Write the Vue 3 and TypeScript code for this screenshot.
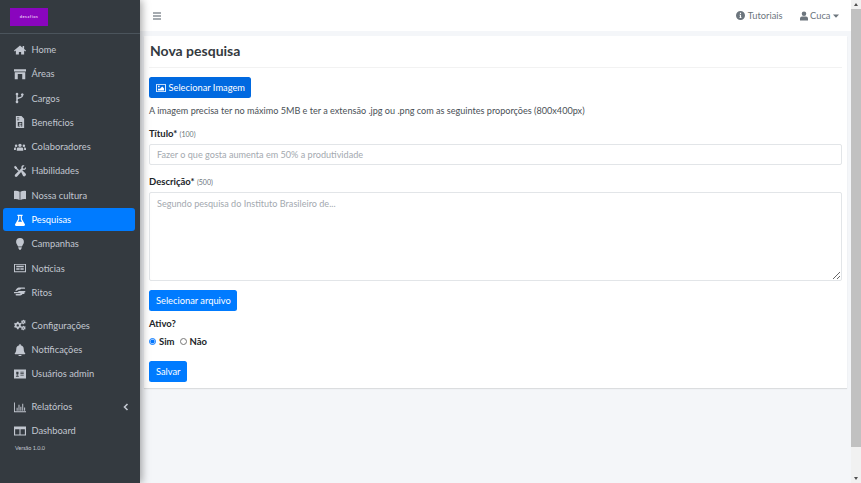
<template>
  <div class="layout">
    <aside class="sidebar">
      <div class="brand">
        <div class="logo">desafios</div>
      </div>
      <nav class="nav">
        <div v-for="(group, g) in menu" :key="g" class="nav-group">
          <a v-for="item in group" :key="item.label" :class="['nav-link', { active: item.label === 'Pesquisas' }]">
            <svg class="nav-icon" viewBox="0 0 16 16" fill="currentColor"><path :d="item.icon" fill-rule="evenodd" /></svg>
            <span class="nav-label">{{ item.label }}</span>
            <span v-if="item.label === 'Relatórios'" class="chevron">
              <svg viewBox="0 0 6 8" width="6" height="8"><path d="M4.5 1 1.500 4l3 3" fill="none" stroke="currentColor" stroke-width="1.600" /></svg>
            </span>
          </a>
        </div>
        <div class="version">Versão 1.0.0</div>
      </nav>
    </aside>

    <div class="main">
      <header class="navbar">
        <svg class="bars" viewBox="0 0 8 8" width="8" height="8" fill="currentColor">
          <rect x="0" y="0.4" width="8" height="1.2" /><rect x="0" y="3.4" width="8" height="1.2" /><rect x="0" y="6.4" width="8" height="1.2" />
        </svg>
        <div class="nav-right">
          <span class="nav-item">
            <svg viewBox="0 0 16 16" width="9" height="9"><path fill="currentColor" fill-rule="evenodd" d="M8 0a8 8 0 1 1 0 16A8 8 0 0 1 8 0Zm-1 3.200v2.200h2V3.200Zm-.8 3.600v1.300H7v3.200h-.8v1.300h3.600v-1.300H9V6.800Z" /></svg>
            Tutoriais
          </span>
          <span class="nav-item">
            <svg viewBox="0 0 14 16" width="8" height="10"><path fill="currentColor" d="M7 0a4 4 0 1 1 0 8 4 4 0 0 1 0-8ZM3.500 9h7A3.500 3.500 0 0 1 14 12.500V16H0v-3.500A3.500 3.500 0 0 1 3.500 9Z" /></svg>
            Cuca
            <svg viewBox="0 0 8 5" width="6" height="4"><path fill="currentColor" d="M0 .5h8L4 4.800Z" /></svg>
          </span>
        </div>
      </header>

      <section class="content">
        <div class="card">
          <div class="card-header"><h1>Nova pesquisa</h1></div>
          <form class="card-body" @submit.prevent>
            <button type="button" class="btn btn-image">
              <svg viewBox="0 0 16 13" width="10" height="8"><path fill="currentColor" fill-rule="evenodd" d="M1 0h14a1 1 0 0 1 1 1v11a1 1 0 0 1-1 1H1a1 1 0 0 1-1-1V1a1 1 0 0 1 1-1Zm.4 1.400v10.200h13.200V1.400ZM4.500 2.600a1.400 1.400 0 1 1 0 2.800 1.400 1.400 0 0 1 0-2.800ZM3 10.400V8.600l1.700-1.700 1.300 1.300 4-4 3 3v3.200Z" /></svg>
              Selecionar Imagem
            </button>
            <p class="hint">A imagem precisa ter no máximo 5MB e ter a extensão .jpg ou .png com as seguintes proporções (800x400px)</p>

            <label class="field-label">Título* <small>(100)</small></label>
            <input class="control" type="text" placeholder="Fazer o que gosta aumenta em 50% a produtividade" />

            <label class="field-label">Descrição* <small>(500)</small></label>
            <textarea class="control area" placeholder="Segundo pesquisa do Instituto Brasileiro de..."></textarea>

            <button type="button" class="btn btn-file">Selecionar arquivo</button>

            <div class="field-label active-label">Ativo?</div>
            <div class="radios">
              <label><input type="radio" name="ativo" checked /> Sim</label>
              <label><input type="radio" name="ativo" /> Não</label>
            </div>

            <button type="submit" class="btn btn-save">Salvar</button>
          </form>
        </div>
      </section>
    </div>

    <div class="scrollbar">
      <span class="arrow up"></span>
      <div class="thumb"></div>
      <span class="arrow down"></span>
    </div>
  </div>
</template>

<script setup lang="ts">
interface MenuItem {
  label: string;
  icon: string;
}

const menu: MenuItem[][] = [
  [
    { label: 'Home', icon: 'M8 2 0 8.800l1 1.100L2.500 8.700V14h4v-3.500h3V14h4V8.700L15 9.900l1-1.100-2.500-2.100V2.500h-2v2.500Z' },
    { label: 'Áreas', icon: 'M0 1.500h16v3H0ZM1 5.500h14V15h-4V8H5v7H1Z' },
    { label: 'Cargos', icon: 'M4 1a1.800 1.800 0 0 1 1 3.300v3.100c1-.6 2-.6 3-.8 1.300-.3 2-.7 2.100-1.500A1.800 1.800 0 1 1 12 5.100c-.2 1.900-1.700 2.800-3.500 3.100-1.700.3-3.100.6-3.500 1.800v1.700a1.800 1.800 0 1 1-2 0V4.300A1.800 1.800 0 0 1 4 1Z' },
    { label: 'Benefícios', icon: 'M2.500 0H10l3.500 3.500V16h-11ZM4 2v1h3V2Zm0 2.500v1h3v-1ZM5 8v6h6V8Zm2.500 1h1.200v.7H10v1H8c-.4 0-.4.500 0 .5h1c1.400 0 1.400 2 .1 2.200v.6H7.900v-.6H6.500v-1H9c.4 0 .4-.500 0-.5H8c-1.500 0-1.500-2.100-.5-2.200Z' },
    { label: 'Colaboradores', icon: 'M8 3.500a2.300 2.300 0 1 1 0 4.600 2.300 2.300 0 0 1 0-4.600ZM2.800 4.500a1.700 1.700 0 1 1 0 3.400 1.700 1.700 0 0 1 0-3.400Zm10.400 0a1.700 1.700 0 1 1 0 3.400 1.700 1.700 0 0 1 0-3.400ZM5.500 8.800h5c1 0 1.800.8 1.800 1.800v2.400H3.700v-2.400c0-1 .8-1.800 1.800-1.800ZM0 12v-1.800c0-1 .7-1.700 1.600-1.700h1.300c-.3.500-.4 1-.4 1.600V12Zm16 0h-2.500v-1.900c0-.6-.1-1.100-.4-1.600h1.300c.9 0 1.600.7 1.600 1.700Z' },
    { label: 'Habilidades', icon: 'M1.500 1 4 3l.2 1.300 2.700 2.700-1.200 1.200L3 5.500 1.700 5.200 0 2.500ZM11.800.300c.8-.2 1.600 0 2.200.5L11.700 3l.4 1.500 1.500.4L16 2.700c.3 1.500-.3 3-1.700 3.600-.8.300-1.500.3-2.200.1L4.200 15.300c-.8.800-2 .8-2.700.1s-.6-1.800.1-2.600L9.900 4.300c-.4-2 .4-3.500 1.900-4ZM9.500 9.300l1.900-1.900 4 3.900c.8.800.8 2 0 2.800l-.5.500c-.8.800-2 .8-2.800 0Z' },
    { label: 'Nossa cultura', icon: 'M0 2.500c2.600-.4 5.300-.2 7.500 1v11c-2.200-1-4.900-1.200-7.500-1ZM16 2.500c-2.600-.4-5.300-.2-7.500 1v11c2.200-1 4.900-1.200 7.500-1Z' },
    { label: 'Pesquisas', icon: 'M4.500 1h7v1.500h-1v4.300l4 7c.5 1-.1 2.200-1.300 2.200H2.800c-1.200 0-1.800-1.200-1.300-2.200l4-7V2.500h-1Zm2.500 1.500v4.800L5.300 10.300h5.400L9 7.300V2.500Z' },
    { label: 'Campanhas', icon: 'M8 0a5.200 5.200 0 0 1 5.200 5.200c0 2.600-1.900 3.800-2.600 6H5.400c-.7-2.200-2.600-3.400-2.600-6A5.200 5.200 0 0 1 8 0ZM5.700 12.200h4.600v1.200l-.8 1.300-.4.800H6.900l-.4-.8-.8-1.300Z' },
    { label: 'Notícias', icon: 'M0 2.500h16v11H0Zm1.300 1.300v8.400h13.400V3.800ZM3 5h10v2H3Zm0 3h4.500v1H3Zm0 1.700h4.500v1H3ZM8.500 8H13v1H8.500Zm0 1.700H13v1H8.500Z' },
    { label: 'Ritos', icon: 'M6 2h8c1 0 1 1.800 0 1.800H9.500c-.6.700-1.500 1.200-2.500 1.200H5.500L4 6.300H1.500C3 4.500 4 2.800 6 2ZM7 6.500h7.500c1 0 1 2-.1 2H13c1.500 0 1.500 2 0 2h-1.500c-.8 1-1.800 1.800-3 2.200H3c-1.200 0-1.200-2 0-2h4c1 0 1.500-.4 2-1H0V8h5c.6-1 1.200-1.500 2-1.500Z' },
  ],
  [
    { label: 'Configurações', icon: 'M6 3.500l.4 1.400 1.100.6 1.400-.4 1 1.700-1 1 .1 1.300 1 1-1 1.700-1.400-.4-1.100.6-.4 1.500H4L3.600 12l-1.100-.6-1.400.4-1-1.700 1-1V7.800l-1-1 1-1.700 1.400.4 1.100-.6L4 3.500Zm-1 3.400a1.600 1.600 0 1 0 0 3.200 1.600 1.600 0 0 0 0-3.200ZM13 1l.3.800.7.300.9-.3.600 1-.6.700v.8l.6.700-.6 1-.9-.3-.7.3L13 7h-1.200l-.3-.8-.7-.3-.8.300-.6-1 .6-.7v-.8l-.6-.7.6-1 .8.300.7-.3.3-.8Zm-.6 2.200a.8.800 0 1 0 0 1.600.8.800 0 0 0 0-1.600ZM13 9l.3.800.7.300.9-.3.600 1-.6.700v.8l.6.700-.6 1-.9-.3-.7.3L13 15h-1.200l-.3-.8-.7-.3-.8.300-.6-1 .6-.7v-.8l-.6-.7.6-1 .8.300.7-.3.3-.8Zm-.6 2.200a.8.800 0 1 0 0 1.600.8.800 0 0 0 0-1.600Z' },
    { label: 'Notificações', icon: 'M8 0c.6 0 1 .4 1 1v.7c2.300.5 4 2.400 4 4.800 0 3.500 1 4.600 2 5.800.4.500.1 1.200-.6 1.200H1.600c-.7 0-1-.7-.6-1.200 1-1.200 2-2.300 2-5.800 0-2.400 1.700-4.300 4-4.800V1c0-.6.400-1 1-1ZM6 14.500h4a2 2 0 0 1-4 0Z' },
    { label: 'Usuários admin', icon: 'M0 2h16v12H0Zm3 3v2.500c0 .8.600 1.500 1.500 1.500S6 8.300 6 7.500V5Zm5.500 0v1H13V5Zm0 2v1H13V7ZM2.500 11.800h4c0-1.300-.8-2.300-2-2.300s-2 1-2 2.300Zm6-2.800v1H13V9Z' },
  ],
  [
    { label: 'Relatórios', icon: 'M0 2h1.200v11.800H16V15H0Zm3.500 7h1.300v4H3.500Zm2.500-4h1.300v8H6Zm2.500 2.500h1.300V13H8.500Zm2.500-4h1.300V13H11Zm2.500 5h1.300V13h-1.300Z' },
    { label: 'Dashboard', icon: 'M0 2h16v12H0Zm1.500 3.500v7H7.300v-7Zm7.200 0v7h5.800v-7Z' },
  ],
];
</script>

<style scoped>
.layout {
  display: flex;
  height: 483px;
  overflow: hidden;
  font-family: Lato, "Open Sans", sans-serif;
  background: #f4f6f9;
  color: #212529;
}

.sidebar {
  width: 140px;
  flex-shrink: 0;
  background: #343a40;
  box-shadow: 2px 0 8px rgba(0, 0, 0, 0.35);
  position: relative;
  z-index: 2;
}

.brand {
  height: 34px;
  box-sizing: border-box;
  padding: 8px 0 0 10px;
  border-bottom: 1px solid #4b545c;
}

.logo {
  width: 38px;
  height: 18px;
  background: #8a05be;
  color: #e7c6f5;
  font-size: 4px;
  font-weight: 700;
  letter-spacing: 0.500px;
  line-height: 18px;
  text-align: center;
}

.nav {
  padding-top: 4px;
}

.nav-group {
  display: flex;
  flex-direction: column;
  margin-bottom: 8.500px;
}

.nav-link {
  display: flex;
  align-items: center;
  height: 23px;
  margin: 0 5px 1.300px 3px;
  padding-left: 11px;
  border-radius: 3px;
  color: #c2c7d0;
  font-size: 9.300px;
}

.nav-link.active {
  background: #007bff;
  color: #fff;
}

.nav-icon {
  width: 12px;
  height: 12px;
  margin-right: 5.500px;
  flex-shrink: 0;
}

.nav-label {
  flex: 1;
}

.chevron {
  display: flex;
  margin-right: 6px;
}

.version {
  margin: -7px 0 0 15px;
  color: #c2c7d0;
  font-size: 5.500px;
}

.main {
  flex: 1;
  min-width: 0;
  display: flex;
  flex-direction: column;
}

.navbar {
  height: 31px;
  flex-shrink: 0;
  display: flex;
  align-items: center;
  justify-content: space-between;
  box-sizing: border-box;
  padding: 0 12px 0 13px;
  background: #fff;
  color: #6c757d;
}

.bars {
  display: block;
}

.nav-right {
  display: flex;
  gap: 17px;
  font-size: 9.300px;
}

.nav-item {
  display: flex;
  align-items: center;
  gap: 2.500px;
}

.content {
  padding: 5px 4px 0;
}

.card {
  background: #fff;
  box-shadow: 0 1px 1px rgba(0, 0, 0, 0.1);
  height: 352px;
}

.card-header {
  height: 31px;
  margin: 0 5px;
  border-bottom: 1px solid rgba(0, 0, 0, 0.05);
}

.card-header h1 {
  margin: 0 0 0 1px;
  font-size: 14px;
  font-weight: 700;
  line-height: 30px;
  color: #343a40;
}

.card-body {
  display: flex;
  flex-direction: column;
  align-items: flex-start;
  padding: 9px 5px 0;
}

.btn {
  display: flex;
  align-items: center;
  gap: 2.500px;
  height: 21px;
  padding: 0 7px;
  border: 0;
  border-radius: 2.500px;
  background: #007bff;
  color: #fff;
  font: inherit;
  font-size: 9.300px;
  white-space: nowrap;
}

.btn svg {
  flex-shrink: 0;
}

.btn-image {
  width: 102px;
  background: #0069e0;
}

.btn-file {
  margin-top: 9px;
  width: 88px;
}

.btn-save {
  margin-top: 13px;
  width: 38px;
}

.hint {
  margin: 6px 0 0;
  font-size: 9.100px;
  line-height: 13px;
  color: #4a5056;
}

.field-label {
  margin-top: 10px;
  font-size: 9.500px;
  line-height: 13px;
  font-weight: 700;
}

.field-label small {
  font-size: 7px;
  font-weight: 400;
  line-height: 1;
  color: #6c757d;
}

.control {
  display: block;
  box-sizing: border-box;
  width: 100%;
  margin-top: 4px;
  padding: 0 7px;
  border: 1px solid #e2e5e8;
  border-radius: 2px;
  font: inherit;
  font-size: 9.100px;
  color: #495057;
  outline: none;
}

input.control {
  height: 21px;
}

textarea.control {
  height: 89px;
  padding-top: 5px;
}

.control::placeholder {
  color: #a3a9af;
  opacity: 1;
}

.active-label {
  margin-top: 5.500px;
}

.radios {
  display: flex;
  gap: 5px;
  margin-top: 5.500px;
  font-size: 9.500px;
  font-weight: 700;
  line-height: 13px;
}

.radios label {
  display: flex;
  align-items: center;
  gap: 3px;
}

.radios input {
  width: 7px;
  height: 7px;
  margin: 0;
}

.scrollbar {
  width: 10px;
  flex-shrink: 0;
  background: #f1f1f1;
  display: flex;
  flex-direction: column;
  align-items: center;
  position: relative;
  z-index: 3;
}

.arrow {
  width: 0;
  height: 0;
  border-left: 2.500px solid transparent;
  border-right: 2.500px solid transparent;
  margin: 3px 0;
}

.arrow.up {
  border-bottom: 3px solid #505050;
}

.arrow.down {
  border-top: 3px solid #505050;
  margin-top: auto;
}

.thumb {
  width: 100%;
  height: 438px;
  background: #c1c1c1;
}
</style>

<style>
html,
body {
  margin: 0;
  background: #f4f6f9;
}
</style>
